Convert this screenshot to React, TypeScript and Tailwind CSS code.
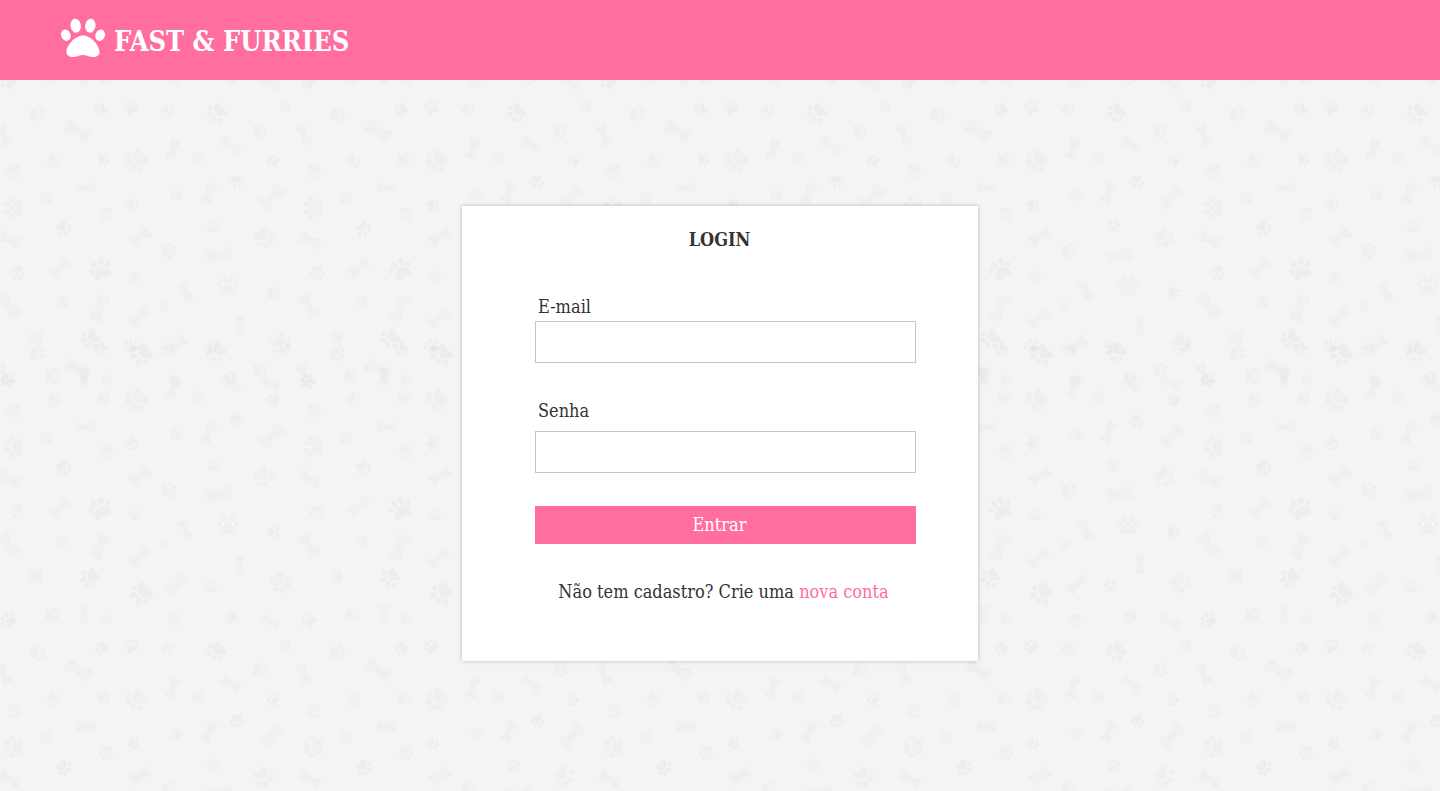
type Motif = { kind: "paw" | "bone"; x: number; y: number; size: number; angle: number; tone: "light" | "mid" | "dark" };

const paw = (x: number, y: number, size: number, angle: number, tone: Motif["tone"] = "mid"): Motif => ({ kind: "paw", x, y, size, angle, tone });
const bone = (x: number, y: number, size: number, angle: number, tone: Motif["tone"] = "mid"): Motif => ({ kind: "bone", x, y, size, angle, tone });

const motifs: Motif[] = [
  paw(8, 1, 16, -50, "dark"),
  paw(52, 296, 16, 90),
  bone(84, 296, 21, 90),
  paw(106, 300, 12, 90),
  paw(175, 1, 14, 180),
  paw(231, 298, 13, -90, "dark"),
  bone(270, 3, 22, 27, "light"),
  paw(38, 34, 17, 90),
  paw(101, 30, 14, -130, "dark"),
  paw(131, 27, 15, -30, "dark"),
  paw(168, 30, 14, 130),
  paw(216, 33, 20, -130, "dark"),
  paw(285, 27, 13, -90, "light"),
  bone(4, 55, 23, 65),
  bone(78, 51, 29, 30),
  bone(231, 65, 23, 32, "light"),
  paw(260, 51, 16, 90),
  bone(173, 69, 22, 108),
  paw(198, 77, 13, 0),
  paw(54, 81, 15, 130),
  paw(104, 79, 13, 90, "dark"),
  paw(136, 81, 23, -130),
  paw(273, 81, 13, -60, "dark"),
  paw(14, 92, 16, 180),
  paw(237, 102, 14, 180, "dark"),
  bone(86, 108, 21, 0),
  paw(46, 118, 14, 0),
  paw(176, 115, 13, -60),
  bone(209, 113, 23, 115),
  bone(272, 117, 29, 137, "light"),
  paw(13, 128, 22, -90),
  paw(133, 125, 13, 125, "dark"),
  paw(106, 134, 15, 180),
  paw(64, 149, 16, 140, "dark"),
  paw(213, 146, 14, 0),
  bone(10, 160, 24, 27),
  bone(140, 157, 24, 148),
  paw(264, 158, 21, 140),
  paw(169, 171, 17, 90),
  bone(219, 175, 29, -10, "light"),
  paw(17, 193, 16, 180),
  bone(59, 188, 25, -42, "light"),
  paw(100, 189, 23, -25, "dark"),
  paw(135, 196, 13, 0),
  bone(186, 211, 22, 68),
  paw(228, 206, 22, 0),
  paw(274, 213, 13, 90, "dark"),
  bone(9, 226, 28, 57, "light"),
  paw(62, 222, 13, -90),
  bone(100, 228, 29, 112, "light"),
  bone(139, 238, 25, -42, "light"),
  paw(164, 226, 11, -80, "light"),
  bone(240, 246, 21, 90),
  paw(36, 257, 15, -90),
  paw(90, 259, 20, -130, "dark"),
  paw(141, 275, 23, -130, "dark"),
  bone(177, 265, 24, -42),
  paw(211, 267, 14, 0),
  paw(281, 264, 22, 140),
];

const opacity = { light: 0.014, mid: 0.02, dark: 0.028 };

function PawShape() {
  return (
    <>
      <path d="M22 17.5C14 17.5 5.5 27.5 5.5 34C5.5 37.5 8.2 39 12 39C16 39 18.5 37 22 37C25.500 37 28 39 32 39C36 39 38.500 37.500 38.500 34C38.500 27.500 30 17.500 22 17.500Z" />
      <ellipse cx="14.700" cy="7.700" rx="5.200" ry="7" transform="rotate(-9 14.700 7.700)" />
      <ellipse cx="29.300" cy="7.700" rx="5.200" ry="7" transform="rotate(9 29.300 7.700)" />
      <ellipse cx="4.900" cy="17.200" rx="4.700" ry="5.800" transform="rotate(-22 4.900 17.200)" />
      <ellipse cx="39.100" cy="17.200" rx="4.700" ry="5.800" transform="rotate(22 39.100 17.200)" />
    </>
  );
}

function BoneShape() {
  return (
    <path d="M6 11C2 9 0 5 3 2C6-1 10 0 12 3C19 7 25 7 32 3C34 0 38-1 41 2C44 5 42 9 39 11C42 13 44 17 41 20C38 23 34 22 32 19C25 16 19 16 12 19C10 22 6 23 3 20C0 17 2 13 6 11Z" />
  );
}

function Backdrop() {
  const offsets = [0, 300];
  return (
    <svg aria-hidden="true" className="pointer-events-none absolute inset-0 h-full w-full">
      <defs>
        <g id="motifs">
          {motifs.map((m, i) => (
            <g
              key={i}
              opacity={opacity[m.tone]}
              transform={`translate(${m.x} ${m.y}) rotate(${m.angle}) scale(${m.size / 44}) translate(-22 ${m.kind === "paw" ? -20 : -11})`}
            >
              {m.kind === "paw" ? <PawShape /> : <BoneShape />}
            </g>
          ))}
        </g>
        {[
          { id: "upper", y: 0 },
          { id: "lower", y: 239 },
        ].map((p) => (
          <pattern key={p.id} id={p.id} x="0" y={p.y} width="300" height="300" patternUnits="userSpaceOnUse">
            {offsets.map((dx) => offsets.map((dy) => <use key={`${dx}-${dy}`} href="#motifs" x={-dx} y={-dy} />))}
            <use href="#motifs" x="300" />
            <use href="#motifs" y="300" />
          </pattern>
        ))}
      </defs>
      <rect width="100%" height="313" fill="url(#upper)" />
      <rect y="252" width="100%" height="100%" fill="url(#lower)" />
    </svg>
  );
}

const fieldClass = "block h-[42px] w-full border border-[#c4c4c4] bg-white px-3 text-lg outline-none focus:border-[#ff6e9f]";

export default function App() {
  return (
    <div className="flex min-h-screen flex-col bg-[#f4f4f4] font-['Roboto_Slab','DejaVu_Serif_Condensed','DejaVu_Serif',serif] text-[#333333]">
      <header className="flex h-20 items-center bg-[#ff6e9f] px-[60px] text-white">
        <a href="#" className="flex items-start gap-2">
          <svg aria-hidden="true" viewBox="0 0 44 40" className="mb-1 h-10 w-[46px]" fill="currentColor">
            <PawShape />
          </svg>
          <span className="pt-1 text-[27px] leading-10 font-bold">FAST &amp; FURRIES</span>
        </a>
      </header>
      <main className="relative flex flex-1 items-start justify-center px-4 py-[126px]">
        <Backdrop />
        <form
          className="relative w-full max-w-[516px] bg-white pt-5 pr-[62px] pb-[55px] pl-[73px] shadow-[0_0_4px_rgba(0,0,0,0.25)]"
          onSubmit={(e) => e.preventDefault()}
        >
          <h1 className="mr-3 text-center text-lg leading-7 font-bold">LOGIN</h1>
          <label htmlFor="email" className="mt-[39px] block pl-[3px] text-lg leading-7">
            E-mail
          </label>
          <input id="email" type="email" className={fieldClass} />
          <label htmlFor="senha" className="mt-[34px] mb-1.5 block pl-[3px] text-lg leading-7">
            Senha
          </label>
          <input id="senha" type="password" className={fieldClass} />
          <button type="submit" className="mt-[33px] block h-[38px] w-full bg-[#ff6e9f] pr-3 text-lg text-white">
            Entrar
          </button>
          <p className="mt-[34px] pr-1 text-center text-lg leading-7">
            Não tem cadastro? Crie uma{" "}
            <a href="#" className="text-[#ff6e9f]">
              nova conta
            </a>
          </p>
        </form>
      </main>
    </div>
  );
}
